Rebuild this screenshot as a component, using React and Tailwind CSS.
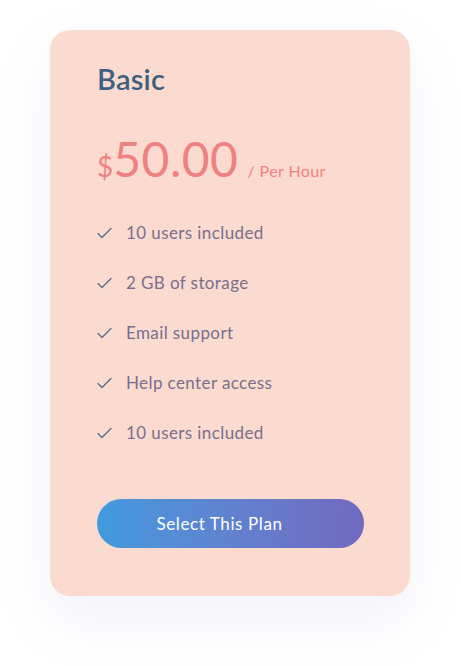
import React from 'react'

const features = [
  '10 users included',
  '2 GB of storage',
  'Email support',
  'Help center access',
  '10 users included',
]

const Check = () => (
  <svg width="15" height="12" viewBox="0 0 15 12" fill="none" className="shrink-0">
    <path d="M1 6.5L5 10.5L14 1.5" stroke="#5b6a8c" strokeWidth="1.3" strokeLinecap="round" strokeLinejoin="round" />
  </svg>
)

const App = () => {
  return (
    <div className="min-h-[666px] w-full bg-white pt-[30px] font-['Lato',sans-serif]">
      <div className="ml-[50px] w-[360px] h-[566px] rounded-[20px] bg-[#fbdbd0] shadow-[0_24px_60px_rgba(120,130,200,0.10)] pl-[47px] pt-[34px]">

        {/* Title */}
        <h2 className="text-[29px] leading-none font-semibold text-[#3f5f80] tracking-[0.2px]">Basic</h2>

        {/* Price */}
        <div className="flex items-baseline mt-[42px] text-[#ef8181]">
          <span className="text-[28px] leading-none">$</span>
          <span className="text-[48px] leading-none tracking-[0.5px]">50.00</span>
          <span className="text-[16px] leading-none ml-[9px] tracking-[0.4px]">/ Per Hour</span>
        </div>

        {/* Features */}
        <ul className="mt-[40px] flex flex-col gap-[30px]">
          {features.map((item, index) => (
            <li key={index} className="flex items-center gap-[14px] h-[20px]">
              <Check />
              <span className="text-[17px] text-[#7a6e8c] tracking-[0.4px]">{item}</span>
            </li>
          ))}
        </ul>

        {/* Button */}
        <button className="mt-[56px] w-[267px] h-[49px] pr-[22px] rounded-full bg-gradient-to-r from-[#409ade] to-[#7169c0] text-white text-[17px] tracking-[0.6px]">
          Select This Plan
        </button>

      </div>
    </div>
  )
}

export default App
